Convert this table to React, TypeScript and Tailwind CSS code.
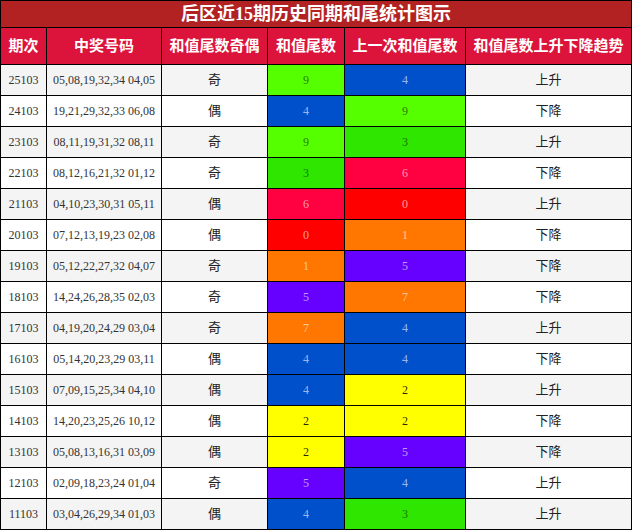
const rows: [string, string, string, number, number, string][] = [
  ["25103", "05,08,19,32,34 04,05", "奇", 9, 4, "上升"],
  ["24103", "19,21,29,32,33 06,08", "偶", 4, 9, "下降"],
  ["23103", "08,11,19,31,32 08,11", "奇", 9, 3, "上升"],
  ["22103", "08,12,16,21,32 01,12", "奇", 3, 6, "下降"],
  ["21103", "04,10,23,30,31 05,11", "偶", 6, 0, "上升"],
  ["20103", "07,12,13,19,23 02,08", "偶", 0, 1, "下降"],
  ["19103", "05,12,22,27,32 04,07", "奇", 1, 5, "下降"],
  ["18103", "14,24,26,28,35 02,03", "奇", 5, 7, "下降"],
  ["17103", "04,19,20,24,29 03,04", "奇", 7, 4, "上升"],
  ["16103", "05,14,20,23,29 03,11", "偶", 4, 4, "下降"],
  ["15103", "07,09,15,25,34 04,10", "偶", 4, 2, "上升"],
  ["14103", "14,20,23,25,26 10,12", "偶", 2, 2, "下降"],
  ["13103", "05,08,13,16,31 03,09", "偶", 2, 5, "下降"],
  ["12103", "02,09,18,23,24 01,04", "奇", 5, 4, "上升"],
  ["11103", "03,04,26,29,34 01,03", "偶", 4, 3, "上升"],
];

// tail digit -> cell colour
const tailColor: Record<number, string> = {
  0: "bg-[#ff0000] text-white/60",
  1: "bg-[#ff7700] text-white/60",
  2: "bg-[#ffff00] text-black/85",
  3: "bg-[#2ee600] text-black/55",
  4: "bg-[#0050cc] text-white/60",
  5: "bg-[#6600ff] text-white/60",
  6: "bg-[#ff0040] text-white/60",
  7: "bg-[#ff7700] text-white/60",
  9: "bg-[#55ff00] text-black/55",
};

const headers = ["期次", "中奖号码", "和值尾数奇偶", "和值尾数", "上一次和值尾数", "和值尾数上升下降趋势"];

export default function App() {
  return (
    <div
      className="w-[632px] bg-black p-px grid grid-cols-[45px_114px_105px_76px_120px_165px] gap-px"
      style={{ fontFamily: '"Liberation Serif", "Noto Sans CJK SC", serif' }}
    >
      <div className="col-span-6 h-[26px] bg-[#b22222] flex items-center justify-center text-white font-bold text-[18px] leading-none">
        后区近15期历史同期和尾统计图示
      </div>
      {headers.map((h) => (
        <div
          key={h}
          className="h-[36px] bg-[#dc143c] flex items-center justify-center text-white font-bold text-[15px] whitespace-nowrap"
        >
          {h}
        </div>
      ))}
      {rows.map(([issue, nums, parity, tail, prev, trend], i) => {
        const bg = i % 2 === 0 ? "bg-[#f4f4f4]" : "bg-white";
        const cell = "h-[30px] flex items-center justify-center text-[12px] whitespace-nowrap";
        return [
          <div key={issue + "a"} className={`${cell} ${bg} text-[#333]`}>{issue}</div>,
          <div key={issue + "b"} className={`${cell} ${bg} text-[#333]`}>{nums}</div>,
          <div key={issue + "c"} className={`${cell} ${bg} text-[13px] text-[#222]`}>{parity}</div>,
          <div key={issue + "d"} className={`${cell} ${tailColor[tail]}`}>{tail}</div>,
          <div key={issue + "e"} className={`${cell} ${tailColor[prev]}`}>{prev}</div>,
          <div key={issue + "f"} className={`${cell} ${bg} text-[13px] text-[#222]`}>{trend}</div>,
        ];
      })}
    </div>
  );
}
